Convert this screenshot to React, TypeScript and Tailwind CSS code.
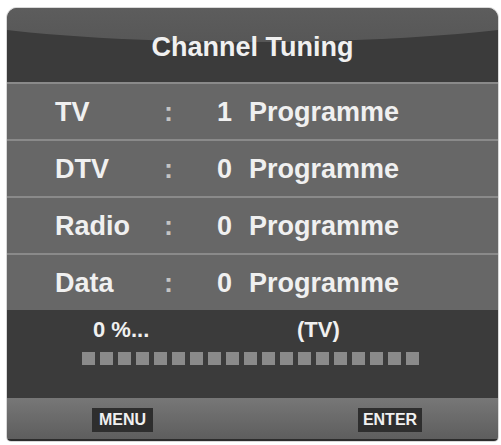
const rows = [
  { label: "TV", count: 1 },
  { label: "DTV", count: 0 },
  { label: "Radio", count: 0 },
  { label: "Data", count: 0 },
];

const steps = Array.from({ length: 19 }, (_, i) => i);

export default function App() {
  return (
    <div className="h-[445px] w-[501px] bg-white pl-[7px] pt-[8px] font-['Liberation_Sans',Arial,sans-serif] font-bold text-[#f0f0f0]">
      <div className="flex h-[433px] w-[491px] flex-col overflow-hidden rounded-t-[10px] rounded-b-[4px] shadow-[0_0_0_1px_#d8d8d8]">
        {/* header with glossy top */}
        <div className="relative flex h-[74px] items-center justify-center overflow-hidden bg-[#3b3b3b]">
          <div className="absolute left-[-155px] top-[-80px] h-[114px] w-[800px] rounded-[50%] bg-gradient-to-b from-[#6a6a6a] to-[#575757]" />
          <span className="relative pt-[4px] text-[27px] leading-none">Channel Tuning</span>
        </div>

        {rows.map((row) => (
          <div
            key={row.label}
            className="flex h-[57px] items-center border-t-2 border-[#8a8a8a] bg-[#676767] pl-[48px] pt-[2px] text-[27px] leading-none"
          >
            <span className="w-[109px]">{row.label}</span>
            <span className="w-[53px] text-[#c4c4c4]">:</span>
            <span className="w-[32px]">{row.count}</span>
            <span>Programme</span>
          </div>
        ))}

        {/* scan progress */}
        <div className="flex h-[88px] flex-col bg-[#3b3b3b] pt-[9px]">
          <div className="flex pl-[86px] text-[22px] leading-none">
            <span className="w-[204px]">0 %...</span>
            <span>(TV)</span>
          </div>
          <div className="ml-[75px] mt-[11px] flex gap-[5px]">
            {steps.map((i) => (
              <div key={i} className="h-[13px] w-[13px] bg-[#8a8a8a]" />
            ))}
          </div>
        </div>

        {/* key hints */}
        <div className="flex h-[43px] items-center border-b-2 border-[#2c2c2c] bg-gradient-to-b from-[#777777] to-[#5e5e5e] pl-[85px] pt-[2px]">
          <span className="flex h-[24px] w-[61px] items-center justify-center bg-[#2e2e2e] text-[16px] leading-none">MENU</span>
          <span className="ml-[205px] flex h-[24px] w-[64px] items-center justify-center bg-[#2e2e2e] text-[16px] leading-none">ENTER</span>
        </div>
      </div>
    </div>
  );
}
